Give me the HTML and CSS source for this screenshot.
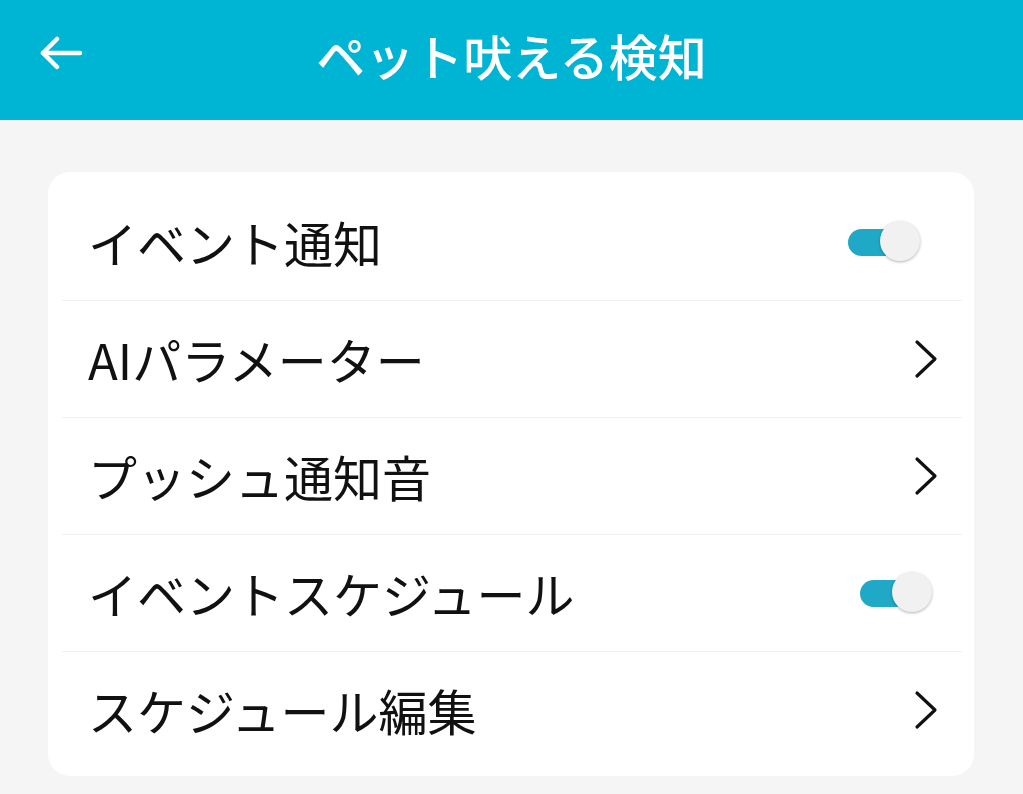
FILE: index.html
```html
<!DOCTYPE html>
<html lang="ja">
<head>
  <meta charset="UTF-8">
  <meta name="viewport" content="width=device-width, initial-scale=1.0">
  <title>ペット吠える検知</title>
  <link rel="stylesheet" href="styles.css">
</head>
<body>
  <header class="topbar">
    <button class="back" type="button" aria-label="戻る">
      <svg width="44" height="34" viewBox="0 0 44 34" fill="none" stroke="#fff" stroke-width="4.5" stroke-linecap="round" stroke-linejoin="round">
        <path d="M41 17H4"/>
        <path d="M18 3L4 17l14 14"/>
      </svg>
    </button>
    <h1>ペット吠える検知</h1>
  </header>

  <main class="content">
    <ul class="card">
      <li class="row">
        <span class="label">イベント通知</span>
        <span class="toggle on first"><span class="thumb"></span></span>
      </li>
      <li class="row">
        <span class="label">AIパラメーター</span>
        <svg class="chevron" width="24" height="40" viewBox="0 0 24 40" fill="none" stroke="#111" stroke-width="3.2" stroke-linecap="round" stroke-linejoin="round">
          <path d="M3 3l18 17L3 37"/>
        </svg>
      </li>
      <li class="row">
        <span class="label">プッシュ通知音</span>
        <svg class="chevron" width="24" height="40" viewBox="0 0 24 40" fill="none" stroke="#111" stroke-width="3.2" stroke-linecap="round" stroke-linejoin="round">
          <path d="M3 3l18 17L3 37"/>
        </svg>
      </li>
      <li class="row">
        <span class="label">イベントスケジュール</span>
        <span class="toggle on"><span class="thumb"></span></span>
      </li>
      <li class="row">
        <span class="label">スケジュール編集</span>
        <svg class="chevron" width="24" height="40" viewBox="0 0 24 40" fill="none" stroke="#111" stroke-width="3.2" stroke-linecap="round" stroke-linejoin="round">
          <path d="M3 3l18 17L3 37"/>
        </svg>
      </li>
    </ul>
  </main>
</body>
</html>
```

FILE: styles.css
```css
body {
  margin: 0;
  background-color: #f5f5f5;
  font-family: "Noto Sans CJK JP", "Noto Sans", sans-serif;
  color: #111;
}
.topbar {
  height: 120px;
  background: #00b4d3;
  display: flex;
  align-items: center;
  justify-content: center;
  position: relative;
}
.topbar h1 {
  margin: 0;
  color: #fff;
  font-size: 49px;
  font-weight: 500;
  line-height: 1;
  padding-bottom: 12px;
}
.back {
  position: absolute;
  left: 39px;
  top: 36px;
  background: none;
  border: none;
  padding: 0;
  cursor: pointer;
}
.content {
  padding: 52px 49px 0 48px;
}
.card {
  list-style: none;
  margin: 0;
  padding: 12px 12px 8px 14px;
  background: #fff;
  border-radius: 22px;
}
.row {
  height: 116px;
  display: flex;
  align-items: center;
  justify-content: space-between;
  border-bottom: 1px solid #f0f0f0;
  padding: 0 24px 0 26px;
}
.row:last-child {
  border-bottom: none;
}
.label {
  font-size: 49px;
  line-height: 1;
  padding-bottom: 2px;
}
.toggle {
  position: relative;
  width: 72px;
  height: 42px;
  display: inline-block;
  margin-right: 6px;
}
.toggle.first {
  margin-right: 18px;
}
.toggle::before {
  content: "";
  position: absolute;
  left: 0;
  top: 8px;
  width: 56px;
  height: 27px;
  border-radius: 14px;
  background: #20a9c7;
}
.thumb {
  position: absolute;
  right: 0;
  top: 0;
  width: 40px;
  height: 40px;
  border-radius: 50%;
  background: #f1f1f1;
  box-shadow: 0 1px 3px rgba(0, 0, 0, 0.3);
}
```
